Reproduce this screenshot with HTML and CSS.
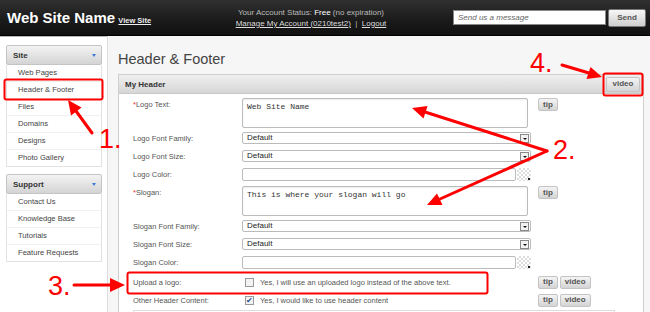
FILE: index.html
```html
<!DOCTYPE html>
<html lang="en">
<head>
    <meta charset="UTF-8">
    <title>Header &amp; Footer</title>
    <link rel="stylesheet" href="styles.css">
</head>
<body>
    <header class="topbar">
        <div class="brand">
            <span class="site-name">Web Site Name</span>
            <a class="view-site" href="#">View Site</a>
        </div>
        <div class="account">
            <div>Your Account Status: <span class="plan">Free</span> (no expiration)</div>
            <div><a href="#">Manage My Account (0210test2)</a> &nbsp;|&nbsp; <a href="#">Logout</a></div>
        </div>
        <form class="message">
            <input type="text" class="message-input" placeholder="Send us a message">
            <button type="button" class="btn-send">Send</button>
        </form>
    </header>

    <div class="layout">
        <aside class="sidebar">
            <div class="nav-group">
                <div class="nav-head">Site <span class="caret"></span></div>
                <ul class="nav-list">
                    <li>Web Pages</li>
                    <li>Header &amp; Footer</li>
                    <li>Files</li>
                    <li>Domains</li>
                    <li>Designs</li>
                    <li>Photo Gallery</li>
                </ul>
            </div>
            <div class="nav-group">
                <div class="nav-head">Support <span class="caret"></span></div>
                <ul class="nav-list">
                    <li>Contact Us</li>
                    <li>Knowledge Base</li>
                    <li>Tutorials</li>
                    <li>Feature Requests</li>
                </ul>
            </div>
        </aside>

        <main class="main">
            <h1 class="page-title">Header &amp; Footer</h1>
            <section class="panel">
                <div class="panel-head">
                    <span>My Header</span>
                    <button type="button" class="btn btn-video">video</button>
                </div>
                <div class="panel-body">
                    <div class="row row-area">
                        <label class="label"><span class="req">*</span>Logo Text:</label>
                        <div class="textarea">Web Site Name</div>
                        <div class="actions"><button type="button" class="btn">tip</button></div>
                    </div>
                    <div class="row">
                        <label class="label">Logo Font Family:</label>
                        <div class="select">Default<span class="select-arrow"></span></div>
                    </div>
                    <div class="row">
                        <label class="label">Logo Font Size:</label>
                        <div class="select">Default<span class="select-arrow"></span></div>
                    </div>
                    <div class="row">
                        <label class="label">Logo Color:</label>
                        <div class="color-input"></div>
                        <div class="swatch"></div>
                    </div>
                    <div class="row row-area">
                        <label class="label"><span class="req">*</span>Slogan:</label>
                        <div class="textarea">This is where your slogan will go</div>
                        <div class="actions"><button type="button" class="btn">tip</button></div>
                    </div>
                    <div class="row">
                        <label class="label">Slogan Font Family:</label>
                        <div class="select">Default<span class="select-arrow"></span></div>
                    </div>
                    <div class="row">
                        <label class="label">Slogan Font Size:</label>
                        <div class="select">Default<span class="select-arrow"></span></div>
                    </div>
                    <div class="row">
                        <label class="label">Slogan Color:</label>
                        <div class="color-input"></div>
                        <div class="swatch"></div>
                    </div>
                    <div class="row row-check">
                        <label class="label">Upload a logo:</label>
                        <div class="check-field"><span class="checkbox"></span>Yes, I will use an uploaded logo instead of the above text.</div>
                        <div class="actions"><button type="button" class="btn">tip</button><button type="button" class="btn">video</button></div>
                    </div>
                    <div class="row row-check">
                        <label class="label">Other Header Content:</label>
                        <div class="check-field"><span class="checkbox checked">&#10004;</span>Yes, I would like to use header content</div>
                        <div class="actions"><button type="button" class="btn">tip</button><button type="button" class="btn">video</button></div>
                    </div>
                    <div class="content-box"></div>
                </div>
            </section>
        </main>
    </div>

    <!-- red annotations drawn over the screenshot -->
    <svg class="notes" width="650" height="312" viewBox="0 0 650 312">
        <g fill="none" stroke="#f00" stroke-width="2">
            <rect x="4.5" y="79.5" width="98" height="20" rx="2"/>
            <rect x="603.5" y="73.5" width="39" height="22" rx="2"/>
            <rect x="127.5" y="272.5" width="360" height="21" rx="2"/>
        </g>
        <g stroke="#f00" stroke-width="3" stroke-linecap="round">
            <line x1="92" y1="133" x2="76" y2="111"/>
            <line x1="547" y1="151" x2="425" y2="112"/>
            <line x1="547" y1="151" x2="440" y2="199"/>
            <line x1="74" y1="285" x2="111" y2="285"/>
            <line x1="562" y1="65" x2="589" y2="73"/>
        </g>
        <g fill="#f00">
            <polygon points="68,100 81.5,107.5 71,115.5"/>
            <polygon points="412,108 427.5,106 423.5,118.5"/>
            <polygon points="427,205 442.5,205 437,193.5"/>
            <polygon points="125,285 110,278 110,292"/>
            <polygon points="602,77 586.5,79 590.5,67"/>
        </g>
        <g class="note-num" fill="#f00">
            <text x="99" y="148">1.</text>
            <text x="553" y="159">2.</text>
            <text x="48" y="295">3.</text>
            <text x="530" y="72">4.</text>
        </g>
    </svg>
</body>
</html>
```

FILE: styles.css
```css
body {
    margin: 0;
    padding: 0;
    position: relative;
    width: 650px;
    height: 312px;
    overflow: hidden;
    font-family: "Liberation Sans", Arial, sans-serif;
    font-size: 8px;
    color: #444;
    background-color: #fff;
}
a {
    color: inherit;
}

/* top bar */
.topbar {
    display: flex;
    align-items: center;
    height: 35px;
    padding: 0 4px 0 7px;
    background: linear-gradient(#303030, #1a1a1a 60%, #111);
    border-bottom: 1px solid #000;
    box-shadow: 0 1px 0 #bbb;
}
.brand {
    width: 228px;
    white-space: nowrap;
}
.site-name {
    font-size: 15px;
    font-weight: bold;
    color: #fff;
}
.view-site {
    font-size: 7.5px;
    font-weight: bold;
    color: #eee;
    margin-left: 1px;
}
.account {
    width: 152px;
    text-align: center;
    color: #bbb;
    line-height: 11px;
    white-space: nowrap;
}
.account .plan {
    color: #fff;
}
.account a {
    color: #ddd;
}
.message {
    display: flex;
    align-items: center;
    margin: 0 0 0 auto;
}
.message-input {
    width: 153px;
    height: 15px;
    box-sizing: border-box;
    padding: 0 4px;
    border: 1px solid #888;
    font-family: inherit;
    font-size: 8px;
    font-style: italic;
    outline: none;
}
.message-input::placeholder {
    color: #666;
}
.btn-send {
    width: 38px;
    height: 18px;
    margin-left: 2px;
    padding: 0;
    border: 1px solid #777;
    border-radius: 2px;
    background: linear-gradient(#f6f6f6, #cfcfcf);
    font-family: inherit;
    font-size: 8px;
    font-weight: bold;
    color: #555;
}

/* layout */
.layout {
    display: flex;
    height: 276px;
    overflow: hidden;
}
.sidebar {
    width: 96px;
    padding: 9px 5px 0 6px;
    border-right: 1px solid #ddd;
    font-size: 7.6px;
}
.nav-group {
    margin-bottom: 7px;
}
.nav-head {
    display: flex;
    align-items: center;
    justify-content: space-between;
    height: 18px;
    padding: 0 5px 0 6px;
    border: 1px solid #c4c4c4;
    border-radius: 2px;
    background: linear-gradient(#f3f3f3, #d4d4d4);
    font-size: 8px;
    font-weight: bold;
    color: #333;
}
.caret {
    width: 0;
    height: 0;
    border-left: 2.5px solid transparent;
    border-right: 2.5px solid transparent;
    border-top: 3px solid #3a7bd5;
}
.nav-list {
    list-style: none;
    margin: 0;
    padding: 0;
    border: 1px solid #e2e2e2;
    border-top: none;
}
.nav-list li {
    height: 16px;
    line-height: 16px;
    padding-left: 11px;
    border-top: 1px solid #f0f0f0;
}
.nav-list li:first-child {
    border-top: none;
}

/* main */
.main {
    flex: 1;
    padding: 13px 6px 0 10px;
    background-color: #f6f6f6;
}
.page-title {
    margin: 0 0 5px;
    font-size: 14.5px;
    font-weight: normal;
    line-height: 20px;
    color: #444;
}
.panel {
    border: 1px solid #cfcfcf;
    background-color: #fff;
}
.panel-head {
    display: flex;
    align-items: center;
    justify-content: space-between;
    height: 18px;
    padding: 0 3px 0 6px;
    background: linear-gradient(#f0f0f0, #d6d6d6);
    border-bottom: 1px solid #c8c8c8;
    font-weight: bold;
    color: #333;
}
.panel-body {
    padding: 4px 0 0 14px;
    font-size: 7.5px;
}
.row {
    display: flex;
    align-items: center;
    height: 12px;
    margin-bottom: 6px;
}
.row-area {
    align-items: flex-start;
    height: 30px;
    margin-bottom: 4px;
}
.row-check {
    height: 16px;
    margin-bottom: 2px;
}
.label {
    width: 109px;
    color: #555;
    white-space: nowrap;
}
.row-area .label {
    padding-top: 2px;
}
.req {
    color: #e33;
}
.textarea {
    width: 286px;
    height: 30px;
    box-sizing: border-box;
    padding: 3px 4px;
    border: 1px solid #bbb;
    border-radius: 2px;
    box-shadow: inset 0 1px 2px rgba(0, 0, 0, 0.08);
    font-family: "Liberation Mono", monospace;
    font-size: 8px;
    color: #333;
}
.select {
    position: relative;
    width: 289px;
    height: 12px;
    box-sizing: border-box;
    padding-left: 4px;
    border: 1px solid #bbb;
    border-radius: 2px;
    font-size: 8px;
    line-height: 10px;
    color: #222;
}
.select-arrow {
    position: absolute;
    right: 1px;
    top: 1px;
    width: 7px;
    height: 7px;
    border: 1px solid #888;
    background: #f2f2f2;
}
.select-arrow::after {
    content: "";
    position: absolute;
    left: 1.5px;
    top: 2.5px;
    border-left: 2px solid transparent;
    border-right: 2px solid transparent;
    border-top: 2.5px solid #111;
}
.color-input {
    width: 274px;
    height: 13px;
    box-sizing: border-box;
    border: 1px solid #bbb;
    border-radius: 2px;
}
.swatch {
    position: relative;
    width: 14px;
    height: 13px;
    margin-left: 1px;
    background: repeating-conic-gradient(#ddd 0 25%, #fff 0 50%) 0 0 / 4px 4px;
}
.swatch::after {
    content: "";
    position: absolute;
    right: 1px;
    bottom: 1px;
    width: 2px;
    height: 2px;
    background: #222;
}
.actions {
    display: flex;
    gap: 2px;
    margin-left: 10px;
}
.row-check .actions {
    margin-left: 49px;
}
.btn {
    height: 13px;
    padding: 0 4px;
    border: 1px solid #c4c4c4;
    border-radius: 2px;
    background: linear-gradient(#f4f4f4, #d4d4d4);
    font-family: inherit;
    font-size: 8px;
    font-weight: bold;
    line-height: 10px;
    color: #555;
}
.btn-video {
    height: 15px;
    width: 34px;
}
.check-field {
    display: flex;
    align-items: center;
    width: 247px;
    color: #555;
    white-space: nowrap;
}
.checkbox {
    width: 7px;
    height: 7px;
    margin: 0 6px 0 3px;
    border: 1px solid #999;
    background: #f3f3f3;
    font-size: 8px;
    line-height: 7px;
    text-align: center;
    color: #2a4f8f;
}
.content-box {
    width: 480px;
    height: 20px;
    border: 1px solid #ddd;
}

/* annotation overlay */
.notes {
    position: absolute;
    left: 0;
    top: 0;
    pointer-events: none;
}
.note-num {
    font-family: "Liberation Sans", Arial, sans-serif;
    font-size: 27px;
}
```
